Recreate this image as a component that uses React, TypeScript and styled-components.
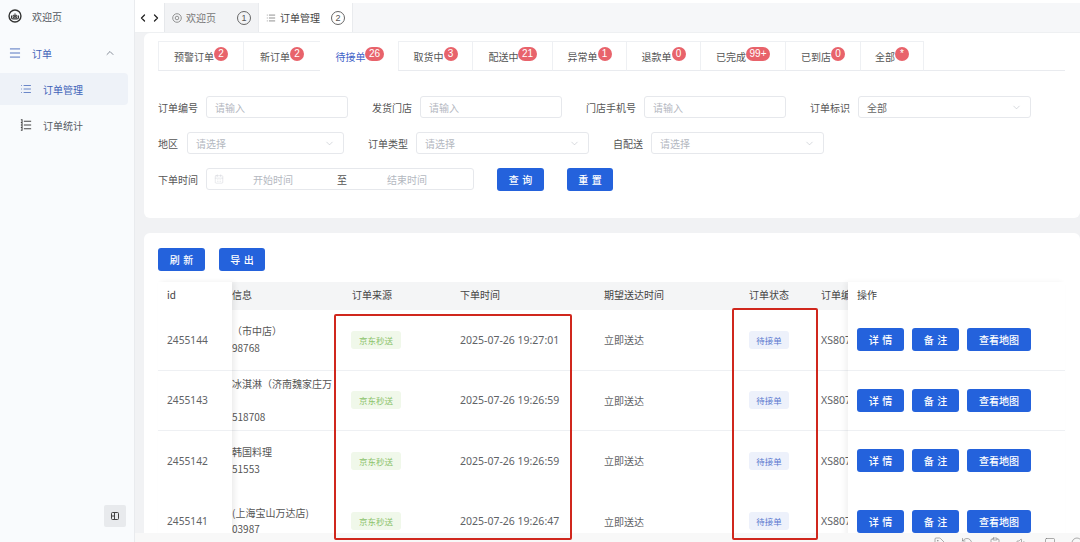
import React from "react";
import styled, { createGlobalStyle } from "styled-components";
import { ChevronDown, ChevronLeft, ChevronRight, ChevronUp, CalendarDays, List, Menu, Tag, RotateCcw, Clipboard, Volume1, Square, Circle } from "lucide-react";

const Global = createGlobalStyle`
  html, body { margin: 0; padding: 0; height: 100%; overflow: hidden; background: #fff; }
  #root { height: 100%; }
  * { box-sizing: border-box; }
  body { font-family: "Noto Sans CJK SC", "Noto Sans", sans-serif; font-size: 10px; color: #606266; }
`;

const Page = styled.div`
  position: relative;
  display: flex;
  width: 1080px;
  height: 542px;
  overflow: hidden;
`;
const Sidebar = styled.aside`
  width: 135px;
  flex: none;
  display: flex;
  flex-direction: column;
  background: #f9fbfd;
  border-right: 1px solid #e9ebee;
  padding: 0 6px 15px 0;
`;
const NavItem = styled.div<{ $active?: boolean; $sub?: boolean; $blue?: boolean }>`
  height: 32px;
  margin-top: ${(p) => (p.$sub ? "4px" : "0")};
  display: flex;
  align-items: center;
  gap: ${(p) => (p.$sub ? "11px" : "10px")};
  padding-left: ${(p) => (p.$sub ? "20px" : "8px")};
  padding-right: 12px;
  border-radius: 0 4px 4px 0;
  color: ${(p) => (p.$blue ? "#3f63b8" : "#555a62")};
  background: ${(p) => (p.$active ? "#eef2f8" : "transparent")};
  svg { flex: none; }
`;
const NavGroup = styled(NavItem)`
  margin-top: 5px;
`;
const Caret = styled.span`
  margin-left: auto;
  display: flex;
  color: #6b7280;
`;
const CollapseButton = styled.div`
  margin-top: auto;
  align-self: flex-end;
  margin-right: 2px;
  width: 22px;
  height: 22px;
  border-radius: 2px;
  background: #e8eaed;
  display: flex;
  align-items: center;
  justify-content: center;
  color: #555;
`;

const Main = styled.div`
  flex: 1;
  min-width: 0;
  display: flex;
  flex-direction: column;
  background: #f1f2f4;
`;
const TopBar = styled.div`
  height: 33px;
  flex: none;
  display: flex;
  align-items: stretch;
  background: #f6f7f9;
  border-top: 3px solid #fff;
  border-bottom: 1px solid #eef0f2;
`;
const ArrowGroup = styled.div`
  width: 30px;
  display: flex;
  align-items: center;
  justify-content: center;
  gap: 1px;
  background: #fff;
  color: #222;
  border-right: 1px solid #e6e8eb;
`;
const PageTab = styled.div<{ $active?: boolean }>`
  width: 94px;
  display: flex;
  align-items: center;
  padding: 0 7px 0 7px;
  gap: 4px;
  background: ${(p) => (p.$active ? "#fff" : "#f2f3f5")};
  color: ${(p) => (p.$active ? "#444" : "#777")};
  border-right: 1px solid #e9ebee;
`;
const CircleNum = styled.span`
  margin-left: auto;
  width: 14px;
  height: 14px;
  border-radius: 50%;
  border: 1px solid #666;
  color: #555;
  font: 9px/12px "Liberation Sans", sans-serif;
  text-align: center;
`;
const Content = styled.div`
  flex: 1;
  min-height: 0;
  display: flex;
  flex-direction: column;
  gap: 15px;
  padding-left: 9px;
`;
const FilterCard = styled.section`
  height: 185px;
  flex: none;
  background: #fff;
  border-radius: 6px 0 6px 6px;
  padding: 8px 15px 0 14px;
`;
const StatusTabs = styled.div`
  display: flex;
  height: 30px;
  border-bottom: 1px solid #e9ebef;
`;
const StatusTab = styled.div<{ $width: number; $active?: boolean }>`
  width: ${(p) => p.$width}px;
  height: 30px;
  flex: none;
  display: flex;
  align-items: center;
  justify-content: center;
  border-top: 1px solid ${(p) => (p.$active ? "#fff" : "#eef0f3")};
  border-left: 1px solid ${(p) => (p.$active ? "#fff" : "#eef0f3")};
  background: #fff;
  color: ${(p) => (p.$active ? "#3f63c8" : "#555")};
  border-bottom: 1px solid ${(p) => (p.$active ? "#fff" : "#e9ebef")};
  &:last-child { border-right: 1px solid #eef0f3; }
`;
const Badge = styled.span`
  min-width: 14px;
  height: 14px;
  padding: 0 3.5px;
  margin-top: -5px;
  border-radius: 7px;
  background: #e8636b;
  color: #fff;
  font: 10px/14px "Liberation Sans", sans-serif;
  text-align: center;
`;
const FormRow = styled.div<{ $first?: boolean; $gap?: number }>`
  display: flex;
  align-items: center;
  height: 22px;
  margin-top: ${(p) => (p.$first ? "25px" : "14px")};
  gap: ${(p) => p.$gap ?? 24}px;
`;
const Field = styled.div<{ $gap?: number }>`
  display: flex;
  align-items: center;
  gap: ${(p) => p.$gap ?? 8}px;
  white-space: nowrap;
  color: #555;
`;
const Control = styled.div<{ $width: number; $filled?: boolean }>`
  width: ${(p) => p.$width}px;
  height: 22px;
  border: 1px solid #e6e8ec;
  border-radius: 3px;
  display: flex;
  align-items: center;
  justify-content: space-between;
  padding: 0 8px;
  color: ${(p) => (p.$filled ? "#666" : "#b4b8bf")};
  svg { color: #c0c4cc; }
`;
const RangeControl = styled.div`
  width: 268px;
  height: 22px;
  border: 1px solid #e6e8ec;
  border-radius: 3px;
  display: grid;
  grid-template-columns: 39px 84px 50px 1fr;
  align-items: center;
  padding-left: 7px;
  color: #b4b8bf;
  svg { color: #d0d3d9; }
`;
const RangeSep = styled.span`
  color: #555;
`;
const Primary = styled.button<{ $width: number }>`
  width: ${(p) => p.$width}px;
  height: 23px;
  border: 0;
  padding: 0;
  flex: none;
  border-radius: 3px;
  background: #2462dc;
  color: #fff;
  font: 500 10px "Noto Sans CJK SC", sans-serif;
  word-spacing: 1.5px;
  white-space: pre;
`;
const QueryButtons = styled.div`
  display: flex;
  gap: 23px;
`;
const TableCard = styled.section`
  flex: 1;
  min-height: 0;
  background: #fff;
  border-radius: 6px 6px 0 0;
  padding: 15px 15px 0 14px;
  overflow: hidden;
`;
const Toolbar = styled.div`
  display: flex;
  gap: 14px;
`;
const TableWrap = styled.div`
  display: flex;
  margin-top: 11px;
`;
const FixedLeft = styled.div`
  width: 74px;
  flex: none;
  position: relative;
  z-index: 1;
  background: #fff;
  box-shadow: 3px 0 5px rgba(0, 0, 0, 0.07);
`;
const FixedRight = styled.div`
  width: 217px;
  flex: none;
  position: relative;
  z-index: 1;
  background: #fff;
  box-shadow: -3px 0 5px rgba(0, 0, 0, 0.05);
`;
const Scroller = styled.div`
  flex: 1;
  min-width: 0;
  overflow: hidden;
`;
const HeadRow = styled.div<{ $grid?: boolean; $plain?: boolean }>`
  height: 28px;
  display: ${(p) => (p.$grid ? "grid" : "flex")};
  grid-template-columns: 120px 108px 144px 145px 72px 27px;
  align-items: center;
  padding-left: ${(p) => (p.$grid ? "0" : "9px")};
  padding-bottom: 3px;
  background: ${(p) => (p.$plain ? "#fff" : "#f4f5f6")};
  color: #444;
  white-space: nowrap;
`;
const BodyRow = styled.div<{ $grid?: boolean; $noLine?: boolean }>`
  height: 60.5px;
  display: ${(p) => (p.$grid ? "grid" : "flex")};
  grid-template-columns: 120px 108px 144px 145px 72px 27px;
  align-items: center;
  gap: ${(p) => (p.$grid ? "0" : "8px")};
  padding-left: ${(p) => (p.$grid ? "0" : "9px")};
  border-bottom: 1px solid ${(p) => (p.$noLine ? "transparent" : "#eef0f3")};
  white-space: nowrap;
  color: #606266;
`;
const NumberText = styled.span`
  font: 10.5px "Noto Sans", sans-serif;
`;
const IdText = styled.span`
  font: 10.2px "Noto Sans", sans-serif;
`;
const Info = styled.div`
  line-height: 16.5px;
  white-space: pre;
  color: #555;
`;
const SourceTag = styled.span`
  width: 50px;
  height: 18px;
  margin-left: -1px;
  border-radius: 3px;
  background: #f0f8ea;
  color: #8cc36a;
  font-size: 8.5px;
  line-height: 18px;
  text-align: center;
`;
const StateTag = styled.span`
  width: 40px;
  height: 18px;
  border-radius: 3px;
  background: #edf1fb;
  color: #5a78cf;
  font-size: 8.5px;
  line-height: 18px;
  text-align: center;
`;
const BottomStrip = styled.div`
  height: 9px;
  flex: none;
  display: flex;
  justify-content: flex-end;
  gap: 15.5px;
  padding: 4px 0 0;
  margin-right: -3px;
  overflow: hidden;
  background: #f8f8f8;
  color: #777;
  svg { flex: none; }
`;
const RedBox = styled.div<{ $x: number; $y: number; $w: number; $h: number }>`
  position: absolute;
  left: ${(p) => p.$x}px;
  top: ${(p) => p.$y}px;
  width: ${(p) => p.$w}px;
  height: ${(p) => p.$h}px;
  border: 2px solid #d0271d;
  border-radius: 2px;
  pointer-events: none;
  z-index: 5;
`;

const Logo = () => (
  <svg width="14" height="14" viewBox="0 0 16 16" fill="none" stroke="#333" strokeWidth="1.6">
    <circle cx="8" cy="8" r="6.8" />
    <path d="M4 7.5v2.2c0 1 .8 1.6 1.8 1.6h4.4c1 0 1.8-.6 1.8-1.6V7.5" strokeWidth="1.2" />
    <path d="M8 5v4.6M5.8 7.2h1.4v2.6H5.8zM8.8 7.2h1.4v2.6H8.8z" strokeWidth="1.1" />
  </svg>
);
const StatsIcon = () => (
  <svg width="12" height="12" viewBox="0 0 14 14" fill="none" stroke="#444" strokeWidth="1.2">
    <path d="M4.5 2.5h8.5M4.5 7h8.5M4.5 11.5h8.5" />
    <path d="M1 1h1.4v12H1M1 4h1.4M1 7h1.4M1 10h1.4" />
  </svg>
);
const SmallRing = () => (
  <svg width="10" height="10" viewBox="0 0 10 10" fill="none" stroke="#888" strokeWidth=".9">
    <circle cx="5" cy="5" r="4.3" />
    <circle cx="5" cy="5" r="1.8" />
  </svg>
);
const PanelIcon = () => (
  <svg width="10" height="10" viewBox="0 0 10 10" fill="none" stroke="#444" strokeWidth="1">
    <rect x="1.5" y="1.5" width="7" height="7" rx="1" />
    <path d="M4.5 1.5v7M1.5 5h3" />
  </svg>
);
const Down = () => <ChevronDown size={11} strokeWidth={1.4} />;

const statusTabs = [
  { label: "预警订单", badge: "2", width: 85 },
  { label: "新订单", badge: "2", width: 77 },
  { label: "待接单", badge: "26", width: 78, active: true },
  { label: "取货中", badge: "3", width: 74 },
  { label: "配送中", badge: "21", width: 80 },
  { label: "异常单", badge: "1", width: 74 },
  { label: "退款单", badge: "0", width: 74 },
  { label: "已完成", badge: "99+", width: 85 },
  { label: "已到店", badge: "0", width: 75 },
  { label: "全部", badge: "*", width: 64 },
];

const rows = [
  { id: "2455144", info: "（市中店）\n98768", time: "2025-07-26 19:27:01" },
  { id: "2455143", info: "冰淇淋（济南魏家庄万\n\n518708", time: "2025-07-26 19:26:59" },
  { id: "2455142", info: "韩国料理\n51553", time: "2025-07-26 19:26:59", noLine: true },
  { id: "2455141", info: "(上海宝山万达店)\n03987", time: "2025-07-26 19:26:47", noLine: true },
];

export default function App() {
  return (
    <Page>
      <Global />
      <Sidebar>
        <NavItem>
          <Logo />
          欢迎页
        </NavItem>
        <NavGroup $blue>
          <Menu size={14} strokeWidth={1.5} />
          订单
          <Caret>
            <ChevronUp size={12} strokeWidth={1.6} />
          </Caret>
        </NavGroup>
        <NavItem $sub $active $blue>
          <List size={12} strokeWidth={1.5} />
          订单管理
        </NavItem>
        <NavItem $sub>
          <StatsIcon />
          订单统计
        </NavItem>
        <CollapseButton>
          <PanelIcon />
        </CollapseButton>
      </Sidebar>
      <Main>
        <TopBar>
          <ArrowGroup>
            <ChevronLeft size={12} strokeWidth={2.6} />
            <ChevronRight size={12} strokeWidth={2.6} />
          </ArrowGroup>
          <PageTab>
            <SmallRing />
            欢迎页
            <CircleNum>1</CircleNum>
          </PageTab>
          <PageTab $active>
            <List size={10} strokeWidth={1.4} />
            订单管理
            <CircleNum>2</CircleNum>
          </PageTab>
        </TopBar>
        <Content>
          <FilterCard>
            <StatusTabs>
              {statusTabs.map((t) => (
                <StatusTab key={t.label} $width={t.width} $active={t.active}>
                  {t.label}
                  <Badge>{t.badge}</Badge>
                </StatusTab>
              ))}
            </StatusTabs>
            <FormRow $first>
              <Field>
                订单编号
                <Control $width={142}>请输入</Control>
              </Field>
              <Field>
                发货门店
                <Control $width={142}>请输入</Control>
              </Field>
              <Field>
                门店手机号
                <Control $width={142}>请输入</Control>
              </Field>
              <Field>
                订单标识
                <Control $width={173} $filled>
                  全部
                  <Down />
                </Control>
              </Field>
            </FormRow>
            <FormRow>
              <Field $gap={9}>
                地区
                <Control $width={157}>
                  请选择
                  <Down />
                </Control>
              </Field>
              <Field>
                订单类型
                <Control $width={173}>
                  请选择
                  <Down />
                </Control>
              </Field>
              <Field>
                自配送
                <Control $width={173}>
                  请选择
                  <Down />
                </Control>
              </Field>
            </FormRow>
            <FormRow $gap={23}>
              <Field>
                下单时间
                <RangeControl>
                  <CalendarDays size={10} strokeWidth={1.2} />
                  <span>开始时间</span>
                  <RangeSep>至</RangeSep>
                  <span>结束时间</span>
                </RangeControl>
              </Field>
              <QueryButtons>
                <Primary $width={47}>查 询</Primary>
                <Primary $width={46}>重 置</Primary>
              </QueryButtons>
            </FormRow>
          </FilterCard>
          <TableCard>
            <Toolbar>
              <Primary $width={47}>刷 新</Primary>
              <Primary $width={46}>导 出</Primary>
            </Toolbar>
            <TableWrap>
              <FixedLeft>
                <HeadRow $plain>id</HeadRow>
                {rows.map((r) => (
                  <BodyRow key={r.id} $noLine={r.noLine}>
                    <IdText>{r.id}</IdText>
                  </BodyRow>
                ))}
              </FixedLeft>
              <Scroller>
                <HeadRow $grid>
                  <span>信息</span>
                  <span>订单来源</span>
                  <span>下单时间</span>
                  <span>期望送达时间</span>
                  <span>订单状态</span>
                  <span>订单编</span>
                </HeadRow>
                {rows.map((r) => (
                  <BodyRow key={r.id} $grid $noLine={r.noLine}>
                    <Info>{r.info}</Info>
                    <SourceTag>京东秒送</SourceTag>
                    <NumberText>{r.time}</NumberText>
                    <span>立即送达</span>
                    <StateTag>待接单</StateTag>
                    <NumberText>XS807</NumberText>
                  </BodyRow>
                ))}
              </Scroller>
              <FixedRight>
                <HeadRow $plain>操作</HeadRow>
                {rows.map((r) => (
                  <BodyRow key={r.id} $noLine={r.noLine}>
                    <Primary $width={47}>详 情</Primary>
                    <Primary $width={47}>备 注</Primary>
                    <Primary $width={64}>查看地图</Primary>
                  </BodyRow>
                ))}
              </FixedRight>
            </TableWrap>
          </TableCard>
        </Content>
        <BottomStrip>
          <Tag size={12} strokeWidth={1.2} />
          <RotateCcw size={12} strokeWidth={1.2} />
          <Clipboard size={12} strokeWidth={1.2} />
          <Volume1 size={12} strokeWidth={1.2} />
          <Square size={12} strokeWidth={1.2} />
          <Circle size={12} strokeWidth={1.2} />
        </BottomStrip>
      </Main>
      <RedBox $x={334} $y={314} $w={238} $h={226} />
      <RedBox $x={732} $y={308} $w={86} $h={232} />
    </Page>
  );
}
